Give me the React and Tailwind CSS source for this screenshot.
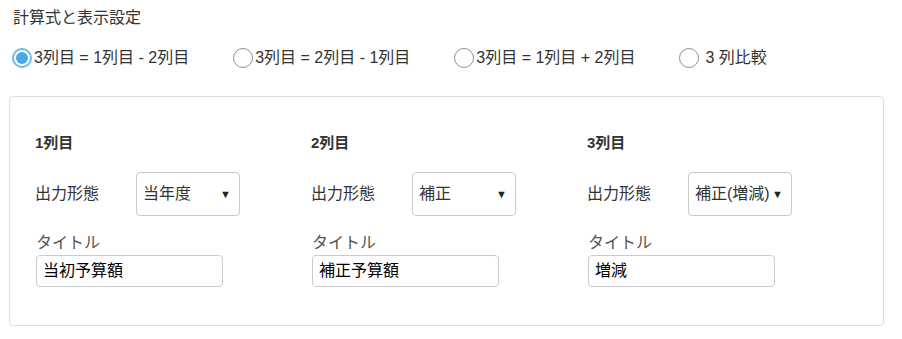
import React from "react";

const font = { fontFamily: '"Liberation Sans", "Noto Sans CJK JP", sans-serif' };

const formulas = [
  { label: "3列目 = 1列目 - 2列目", checked: true },
  { label: "3列目 = 2列目 - 1列目" },
  { label: "3列目 = 1列目 + 2列目" },
  { label: "3 列比較", pad: true },
];

const columns = [
  { head: "1列目", output: "当年度", title: "当初予算額" },
  { head: "2列目", output: "補正", title: "補正予算額" },
  { head: "3列目", output: "補正(増減)", title: "増減" },
];

const Radio = ({ label, checked, pad }) => (
  <label className="flex items-center mr-[44px]">
    {checked ? (
      <span className="w-5 h-5 rounded-full border-2 border-[#6bbbea] flex items-center justify-center">
        <span className="w-3 h-3 rounded-full bg-[#45a9e6]" />
      </span>
    ) : (
      <span className="w-5 h-5 rounded-full border border-[#8f8f8f]" />
    )}
    <span className={pad ? "ml-[6px]" : "ml-[2px]"}>{label}</span>
  </label>
);

const Column = ({ head, output, title }) => (
  <div>
    <div className="font-bold text-[15px] leading-5 h-5">{head}</div>
    <div className="flex items-center mt-[19px]">
      <div className="w-[101px]">出力形態</div>
      <div className="w-[104px] h-11 border border-[#ccc] rounded-[4px] flex items-center justify-between pl-[6px] pr-[8px]">
        <span className="whitespace-nowrap">{output}</span>
        <span className="text-[11px] text-[#222]">▼</span>
      </div>
    </div>
    <div className="mt-4 ml-px text-[#555] leading-[22px]">タイトル</div>
    <div className="ml-px mt-px w-[187px] h-8 border border-[#ccc] rounded-[4px] flex items-center px-[6px] text-black">
      {title}
    </div>
  </div>
);

export default function App() {
  return (
    <div className="bg-white w-[902px] h-[339px] text-[16px] text-[#333] pt-[7px]" style={font}>
      <div className="pl-[13px] leading-[22px]">計算式と表示設定</div>
      <div className="flex items-center pl-[12px] mt-[19px] h-5 leading-5">
        {formulas.map((f) => (
          <Radio key={f.label} {...f} />
        ))}
      </div>
      <div className="ml-[9px] mt-[28px] w-[875px] border border-[#ddd] rounded-[4px] pt-[36px] pb-[38px] pl-[25px]">
        <div className="grid grid-cols-[276px_276px_276px]">
          {columns.map((c) => (
            <Column key={c.head} {...c} />
          ))}
        </div>
      </div>
    </div>
  );
}
